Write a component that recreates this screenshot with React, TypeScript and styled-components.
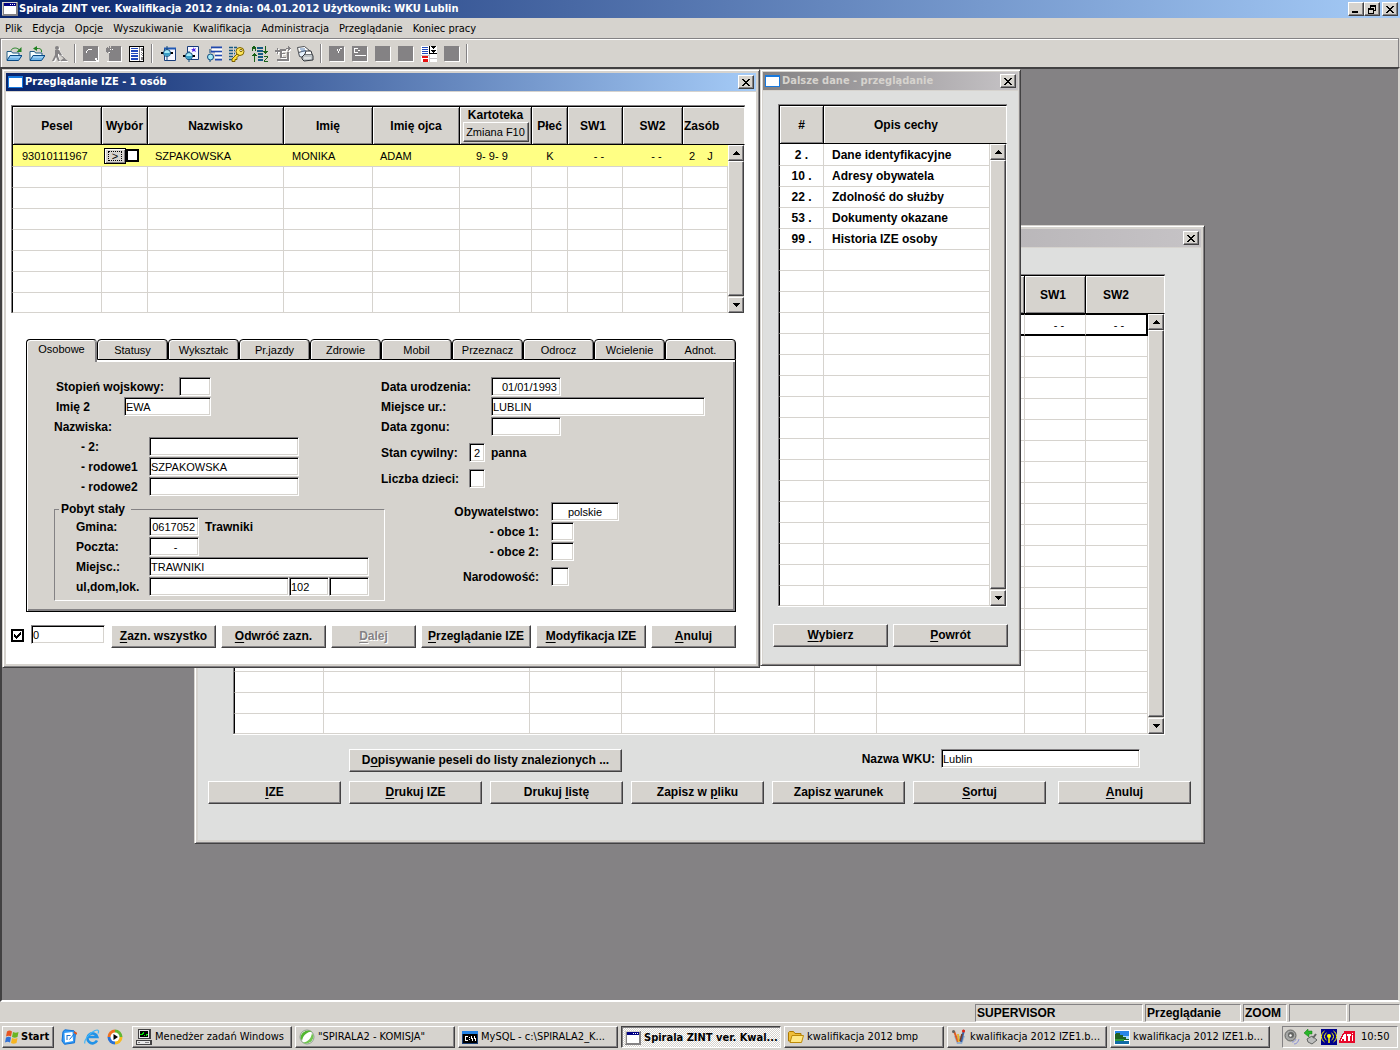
import React from 'react';
import styled, { createGlobalStyle, css } from 'styled-components';

const face = '#d6d3ce';
const shade = '#848284';
const dark = '#424142';
const ui = `"DejaVu Sans Condensed", "DejaVu Sans", sans-serif`;
const sans = `"Liberation Sans", Arial, sans-serif`;

const GlobalStyle = createGlobalStyle`
  *, *::before, *::after { box-sizing: border-box; }
  body { margin: 0; background: ${shade}; color: #000; font: 11px/14px ${sans}; }
  button, input { font: inherit; color: inherit; border-radius: 0; margin: 0; padding: 0; }
`;

const raised = css`
  background: ${face};
  border: 1px solid;
  border-color: #fff ${dark} ${dark} #fff;
  box-shadow: inset -1px -1px ${shade};
`;
const sunken = css`
  border: 1px solid;
  border-color: ${shade} #fff #fff ${shade};
`;

/* ---------- shell ---------- */

const Screen = styled.div`
  min-height: 100vh;
  display: flex;
  flex-direction: column;
  background: ${face};
  overflow: hidden;
`;

const MainTitle = styled.header`
  display: flex;
  align-items: center;
  height: 18px;
  padding: 0 2px;
  gap: 1px;
  background: linear-gradient(90deg, #08246b, #a5cbf7);
  color: #fff;
  font: bold 11px/18px ${ui};
`;

const TitleText = styled.h1`
  flex: 1;
  margin: 0;
  font: inherit;
  white-space: nowrap;
`;

const CaptionButton = styled.button<{ $apart?: boolean }>`
  ${raised}
  display: flex;
  align-items: center;
  justify-content: center;
  width: 16px;
  height: 14px;
  margin-left: ${(p) => (p.$apart ? 1 : -1)}px;
`;

const MenuBar = styled.nav`
  display: flex;
  align-items: center;
  height: 20px;
  padding: 1px 0 0 5px;
  gap: 10px;
  font: 11px/14px ${ui};
`;

const MenuItem = styled.a`
  color: #000;
  text-decoration: none;
  white-space: nowrap;
`;

const ToolBar = styled.div`
  display: flex;
  align-items: center;
  height: 29px;
  padding: 1px 0 0 1px;
  margin-right: 1px;
  border-top: 1px solid ${shade};
  border-left: 1px solid ${shade};
  border-right: 1px solid ${shade};
  box-shadow: inset 1px 1px #fff;
`;

const ToolButton = styled.button`
  display: flex;
  align-items: center;
  justify-content: center;
  width: 23px;
  height: 22px;
  border: 0;
  background: none;
`;

const ToolSeparator = styled.span`
  width: 2px;
  height: 19px;
  margin: 0 3px;
  border-left: 1px solid ${shade};
  border-right: 1px solid #fff;
`;

const Workspace = styled.main`
  position: relative;
  flex: 1;
  min-height: 790px;
  background: ${shade};
  border: 2px solid;
  border-color: ${dark} ${face} #fff ${dark};
  overflow: hidden;
`;

/* ---------- windows ---------- */

const Window = styled.section<{ $x: number; $y: number; $w: number; $edge: number; $fill: string }>`
  position: absolute;
  left: ${(p) => p.$x}px;
  top: ${(p) => p.$y}px;
  width: ${(p) => p.$w}px;
  padding: ${(p) => p.$edge - 1}px;
  background: ${(p) => p.$fill};
  border: 1px solid;
  border-color: ${face} ${dark} ${dark} ${face};
  box-shadow: inset 1px 1px #fff, inset -1px -1px ${shade}, inset 0 0 0 ${(p) => p.$edge - 1}px ${face};
`;

const TitleBar = styled.header<{ $active?: boolean }>`
  display: flex;
  align-items: center;
  height: 18px;
  padding: 0 2px;
  gap: 2px;
  font: bold 11px/18px ${ui};
  color: ${(p) => (p.$active ? '#fff' : face)};
  background: ${(p) => (p.$active ? 'linear-gradient(90deg, #08246b, #a5cbf7)' : 'linear-gradient(90deg, #848284, #c6c3c6)')};
`;

const WindowName = styled.h2`
  flex: 1;
  margin: 0;
  font: inherit;
  white-space: nowrap;
`;

const Body = styled.div<{ $pad: string }>`
  display: flex;
  flex-direction: column;
  border-top: 1px solid ${face};
  padding: ${(p) => p.$pad};
`;

/* ---------- grid ---------- */

const Table = styled.table`
  width: 100%;
  table-layout: fixed;
  border-collapse: separate;
  border-spacing: 0;
  background: #fff;
  border-left: 1px solid ${shade};
  border-top: 1px solid ${shade};
  box-shadow: 0 1px #fff;
`;

const HeadCell = styled.th<{ $last: boolean; $first: boolean; $align?: string; $pad?: string }>`
  height: 39px;
  padding: ${(p) => p.$pad || '0'};
  background: ${face};
  border-top: 1px solid #000;
  border-bottom: 1px solid #000;
  border-left: ${(p) => (p.$first ? '1px solid #000' : '0')};
  border-right: ${(p) => (p.$last ? '1px solid #fff' : '1px solid #000')};
  box-shadow: inset 1px 1px #fff, inset -1px -1px ${(p) => (p.$last ? face : shade)};
  font: bold 12px/14px ${sans};
  text-align: ${(p) => p.$align || 'center'};
  white-space: nowrap;
`;

const Cell = styled.td<{ $first?: boolean; $top?: boolean; $end?: boolean; $tone?: string; $pad?: number; $align?: string; $bold?: boolean }>`
  height: ${(p) => (p.$top ? 22 : p.$end ? 20 : 21)}px;
  padding: 0 0 0 ${(p) => p.$pad || 0}px;
  background: ${(p) => p.$tone || '#fff'};
  border-left: ${(p) => (p.$first ? '1px solid #000' : '0')};
  border-right: ${(p) => (p.$tone ? '0' : `1px solid ${face}`)};
  border-bottom: 1px solid ${face};
  font: ${(p) => (p.$bold ? `bold 12px/14px ${sans}` : `11px/14px ${sans}`)};
  text-align: ${(p) => p.$align || 'left'};
  white-space: pre;
`;

const FocusCell = styled(Cell)`
  border-bottom: 2px solid #000;
  border-top: 1px solid #000;
  &:nth-last-child(2) { border-right: 2px solid #000; }
`;

const ScrollCell = styled.td`
  height: 1px;
  padding: 0;
  background: ${face};
  border-right: 1px solid #fff;
`;

const ScrollTrack = styled.div`
  display: flex;
  flex-direction: column;
  height: 100%;
`;

const ScrollArrow = styled.button`
  ${raised}
  display: flex;
  align-items: center;
  justify-content: center;
  width: 16px;
  height: 16px;
`;

const ScrollThumb = styled.div`
  ${raised}
  flex: 1;
  width: 16px;
  margin-bottom: 1px;
`;

const StackHead = styled.div`
  display: flex;
  flex-direction: column;
  align-items: center;
  padding-bottom: 1px;
`;

const SmallButton = styled.button`
  ${raised}
  width: 66px;
  height: 20px;
  font: 11px/14px ${sans};
`;

const PickBox = styled.div`
  display: flex;
  align-items: center;
  padding-left: 2px;
`;

const PickButton = styled.button`
  width: 22px;
  height: 16px;
  display: flex;
  align-items: center;
  justify-content: center;
  background: ${face};
  border: 1px solid #000;
  box-shadow: inset 1px 1px #fff, inset -1px -1px ${shade};
  font: 11px/12px ${sans};
  span { width: 14px; height: 10px; line-height: 8px; border: 1px dotted #000; }
`;

const CheckBox = styled.input`
  appearance: none;
  width: 13px;
  height: 13px;
  background: #fff;
  border: 2px solid #000;
`;

const CheckHolder = styled.label`
  display: grid;
  width: 20px;
  padding-top: 4px;
  & > * { grid-area: 1 / 1; }
  svg { margin: 2px; pointer-events: none; }
`;

type Col = { w: number; head: React.ReactNode; pad?: number; align?: string; headAlign?: string; headPad?: string };

function Grid({ cols, rows, total, tone, bold, focus, label }: {
  cols: Col[]; rows: React.ReactNode[][]; total: number; tone?: string; bold?: boolean; focus?: boolean; label: string;
}) {
  const lines = Array.from({ length: total }, (_, i) => rows[i] || []);
  return (
    <Table aria-label={label}>
      <colgroup>
        {cols.map((c, i) => <col key={i} width={i === 0 ? c.w + 1 : c.w} />)}
        <col width={17} />
      </colgroup>
      <thead>
        <tr>
          {cols.map((c, i) => (
            <HeadCell key={i} $first={i === 0} $last={i === cols.length - 1} $align={c.headAlign} $pad={c.headPad} colSpan={i === cols.length - 1 ? 2 : 1}>
              {c.head}
            </HeadCell>
          ))}
        </tr>
      </thead>
      <tbody>
        {lines.map((line, r) => (
          <tr key={r}>
            {cols.map((c, i) => {
              const Kind = focus && r === 0 ? FocusCell : Cell;
              return (
                <Kind key={i} $first={i === 0} $top={r === 0} $end={r === total - 1} $tone={r === 0 ? tone : undefined}
                  $pad={c.pad} $align={c.align} $bold={bold}>{line[i]}</Kind>
              );
            })}
            {r === 0 && (
              <ScrollCell rowSpan={total}>
                <ScrollTrack>
                  <ScrollArrow aria-label="W górę"><svg width="7" height="4" shapeRendering="crispEdges"><path d="M3 0h1v1h1v1h1v1h1v1H0V3h1V2h1V1h1z" /></svg></ScrollArrow>
                  <ScrollThumb />
                  <ScrollArrow aria-label="W dół"><svg width="7" height="4" shapeRendering="crispEdges"><path d="M0 0h7v1H6v1H5v1H4v1H3V3H2V2H1V1H0z" /></svg></ScrollArrow>
                </ScrollTrack>
              </ScrollCell>
            )}
          </tr>
        ))}
      </tbody>
    </Table>
  );
}

/* ---------- controls ---------- */

const PushButton = styled.button<{ $w: number; $push?: boolean }>`
  ${raised}
  flex: 0 0 auto;
  width: ${(p) => p.$w}px;
  height: 23px;
  margin-left: ${(p) => (p.$push ? 'auto' : 0)};
  padding-bottom: 2px;
  font: bold 12px/14px ${sans};
  white-space: nowrap;
  u { text-underline-offset: 2px; }
  &:disabled { color: ${shade}; text-shadow: 1px 1px #fff; }
`;

const Line = styled.div<{ $gap?: number; $top?: number; $left?: number }>`
  display: flex;
  align-items: flex-start;
  gap: ${(p) => p.$gap || 0}px;
  margin-top: ${(p) => p.$top || 0}px;
  padding-left: ${(p) => p.$left || 0}px;
`;

const TextBox = styled.input<{ $w: number; $align?: string }>`
  ${sunken}
  flex: 0 0 auto;
  width: ${(p) => p.$w}px;
  height: 19px;
  padding: ${(p) => (p.$align === 'right' ? '0 3px 0 1px' : '0 1px')};
  background: #fff;
  box-shadow: inset 1px 1px #000, inset -1px -1px ${face};
  font: 11px/14px ${sans};
  text-align: ${(p) => p.$align || 'left'};
`;

const TabStrip = styled.div`
  display: flex;
  margin: 26px 9px 0 15px;
`;

const Tab = styled.button<{ $on?: boolean }>`
  position: relative;
  z-index: ${(p) => (p.$on ? 1 : 0)};
  flex: 1;
  height: ${(p) => (p.$on ? 23 : 21)}px;
  margin-bottom: ${(p) => (p.$on ? -2 : 0)}px;
  background: ${face};
  border: 1px solid #000;
  border-bottom-width: ${(p) => (p.$on ? 0 : 1)}px;
  border-right-color: ${(p) => (p.$on ? shade : '#000')};
  border-radius: 4px 4px 0 0;
  box-shadow: inset 1px 1px #fff, inset -1px 0 ${shade};
  font: 11px/14px ${sans};
  padding-bottom: ${(p) => (p.$on ? 4 : 0)}px;
`;

const TabPanel = styled.div`
  display: flex;
  margin: 0 9px 0 15px;
  padding: 17px 0 10px 27px;
  background: ${face};
  border: 1px solid #000;
  border-top: 0;
  box-shadow: inset 1px 2px #fff, inset -2px -2px ${shade};
`;

const FormColumn = styled.div<{ $w: number }>`
  display: flex;
  flex-direction: column;
  width: ${(p) => p.$w}px;
`;

const FieldRow = styled.div<{ $indent?: number; $gap?: number }>`
  display: flex;
  height: 20px;
  padding-left: ${(p) => p.$indent || 0}px;
  margin-top: ${(p) => p.$gap || 0}px;
`;

const FieldLabel = styled.label<{ $w?: number; $right?: boolean }>`
  flex: 0 0 auto;
  width: ${(p) => (p.$w ? `${p.$w}px` : 'auto')};
  padding-right: ${(p) => (p.$right ? 12 : 0)}px;
  text-align: ${(p) => (p.$right ? 'right' : 'left')};
  font: bold 12px/20px ${sans};
  white-space: nowrap;
`;

const FieldNote = styled.span`
  padding-left: 6px;
  font: bold 12px/20px ${sans};
`;

const Group = styled.fieldset`
  width: 331px;
  margin: 5px 0 0;
  padding: 1px 0 3px 21px;
  border: 1px solid;
  border-color: ${shade} #fff #fff ${shade};
  legend { margin-left: -17px; padding: 0 6px 0 2px; font: bold 12px/14px ${sans}; }
`;

function Field({ id, text, label, w, value = '', align, indent, gap, note, right }: {
  id: string; text: string; label: number; w: number; value?: string; align?: string; indent?: number; gap?: number; note?: string; right?: boolean;
}) {
  return (
    <FieldRow $indent={indent} $gap={gap}>
      <FieldLabel htmlFor={id} $w={label} $right={right}>{text}</FieldLabel>
      <TextBox id={id} $w={w} $align={align} defaultValue={value} />
      {note && <FieldNote>{note}</FieldNote>}
    </FieldRow>
  );
}

/* ---------- status bar and task bar ---------- */

const StatusBar = styled.footer`
  display: flex;
  justify-content: flex-end;
  gap: 2px;
  height: 20px;
  padding-top: 2px;
  font: bold 12px/16px ${sans};
`;

const StatusPane = styled.div<{ $w: number }>`
  ${sunken}
  width: ${(p) => p.$w}px;
  height: 18px;
  padding-left: 1px;
`;

const TaskBar = styled.footer`
  display: flex;
  align-items: flex-start;
  gap: 3px;
  height: 28px;
  padding: 3px 2px 0;
  border-top: 1px solid #fff;
  font: 11px/14px ${ui};
`;

const StartButton = styled.button`
  ${raised}
  display: flex;
  align-items: center;
  gap: 1px;
  width: 52px;
  height: 22px;
  padding-left: 1px;
  font: bold 11px/14px ${ui};
`;

const QuickLaunch = styled.div`
  display: flex;
  gap: 1px;
  width: 72px;
  padding: 0 0 0 1px;
`;

const QuickButton = styled.button`
  display: flex;
  align-items: center;
  justify-content: center;
  width: 22px;
  height: 22px;
  border: 0;
  background: none;
`;

const TaskButton = styled.button<{ $on?: boolean }>`
  ${raised}
  display: flex;
  align-items: center;
  gap: 3px;
  flex: 0 1 160px;
  min-width: 0;
  height: 22px;
  padding: 0 0 0 3px;
  span { white-space: nowrap; }
  svg { flex: none; }
  ${(p) => p.$on && css`
    background: repeating-conic-gradient(#fff 0 25%, ${face} 0 50%) 0 0 / 2px 2px;
    border-color: ${dark} #fff #fff ${dark};
    box-shadow: inset 1px 1px ${shade};
    padding-top: 2px;
    font-weight: bold;
  `}
`;

const Tray = styled.div`
  ${sunken}
  display: flex;
  align-items: center;
  gap: 2px;
  height: 22px;
  width: 116px;
  margin-left: auto;
  padding-left: 1px;
  time { margin-left: 4px; }
`;

/* ---------- icons ---------- */

const Px = ({ children, w = 16, h = 16 }: { children: React.ReactNode; w?: number; h?: number }) => (
  <svg width={w} height={h} viewBox={`0 0 ${w} ${h}`} shapeRendering="crispEdges" aria-hidden="true">{children}</svg>
);
const Art = ({ children, w = 16 }: { children: React.ReactNode; w?: number }) => (
  <svg width={w} height="16" viewBox={`0 0 ${w} 16`} fill="none" aria-hidden="true">{children}</svg>
);

const AppIcon = () => (
  <Px h={14}>
    <path fill="#848284" d="M0 0h16v14H0z" /><path fill="#d6d3ce" d="M0 0h15v1H1v12H0z" />
    <path fill="#fff" d="M2 4h12v8H2z" /><path fill="#000084" d="M2 1h12v3H2z" />
    <path fill="#fff" d="M8 2h1v1H8zM10 2h1v1h-1zM12 2h1v1h-1z" />
  </Px>
);
const FormIcon = () => (
  <Px w={15} h={12}>
    <path fill="#1879de" d="M0 0h15v12H0z" /><path fill="#fff" d="M1 2h13v9H1z" />
  </Px>
);
const CloseGlyph = () => <Px w={8} h={7}><path d="M0 0h2v1h1v1h2V1h1V0h2v1H7v1H6v1H5v1h1v1h1v1h1v1H6V6H5V5H3v1H2v1H0V6h1V5h1V4h1V3H2V2H1V1H0z" /></Px>;
const MinGlyph = () => <Px w={8} h={8}><path d="M0 6h6v2H0z" /></Px>;
const RestoreGlyph = () => <Px w={8} h={9}><path d="M2 0h6v6H6V5h1V2H3v1H2zM0 3h6v6H0zm1 2v3h4V5z" fillRule="evenodd" /></Px>;

const FolderArrow = ({ back }: { back?: boolean }) => (
  <Art>
    <path d="M1 14V5.500h4.500l1 1.500H13v2" fill="#f7ffff" stroke="#215a84" />
    <path d="M1 14.500 4 9.500h12l-3.500 5z" fill="#73b6e7" stroke="#084984" />
    <path d="M4 11h10" stroke="#bde3ff" />
    {back ? <><path d="M5 2.500h4.500c2 0 3 1 3 2.500v1" stroke="#218221" /><path d="M8 0v5L4 2.500z" fill="#218221" /></>
      : <><path d="M5 4.500C6 2 10 1 13 3.500" stroke="#218221" /><path d="M15.500 1v5h-5z" fill="#218221" /></>}
  </Art>
);
const diggerShape = 'M3 4h4l3 5H8L6 7v3l2 5H6L4 11l-2 4H0l3-6zM8 15l4-3 4 3z';
const Digger = () => (
  <Art>
    <g transform="translate(1 1)" fill="#fff"><circle cx="5" cy="2" r="2" /><path d={diggerShape} /></g>
    <g fill="#848284"><circle cx="5" cy="2" r="2" /><path d={diggerShape} /></g>
    <path d="M5 6l8 7" stroke="#848284" />
  </Art>
);
const GreySquare = ({ kind }: { kind?: string }) => (
  <Px>
    <path fill="#fff" d="M1 1h15v15H1z" /><path fill="#848284" d="M0 0h15v15H0z" />
    {kind === 'curve' && <path fill="#fff" d="M3 5h1V4h1V3h4v1H5v1H4v2H3zM12 12h2v2h1v1h-2v-1h-1z" />}
    {kind === 'spark' && <><path fill="#d6d3ce" d="M0 0h5v2H0zM0 6h3v9H0z" /><path fill="#848284" d="M1 1h1v1H1zM3 0h1v3H3zM5 2h2v1H5zM0 4h3v1H0zM1 6h1v1H1z" /><path fill="#fff" d="M4 3h1v1H4zM3 6h1v1H3zM6 3h1v1H6z" /></>}
    {kind === 'check' && <path fill="#fff" d="M8 3h1v2H8zM9 5h1v2H9zM10 3h1v2h-1zM11 2h2v1h-2z" />}
    {kind === 'line' && <path fill="#fff" d="M2 2h4v1H3v3h3v1H2zM3 9h11v1H3zM6 4h2v1H6z" />}
  </Px>
);
const ListIcon = () => (
  <Px>
    <path fill="#000" d="M0 0h15v16H0z" /><path fill="#fff" d="M1 1h13v14H1z" />
    <path fill="#2149bd" d="M2 2h7v1H2zM2 4h7v2H2zM2 7h7v1H2zM2 9h7v2H2zM2 12h7v2H2z" />
    <path fill="#848284" d="M10 1h1v14h-1zM12 2h2v3h-2zM12 6h1v1h-1zM13 7h1v1h-1zM12 8h1v1h-1zM13 9h1v1h-1zM12 11h2v3h-2z" />
  </Px>
);
const Lens = ({ x, y }: { x: number; y: number }) => (
  <g transform={`translate(${x} ${y})`}>
    <path d="M-6 0H6" stroke="#000" strokeWidth="2" />
    <circle r="3.500" fill="#a5ebf7" stroke="#10497b" /><path d="M-3 0a3 3 0 0 0 6 0z" fill="#399ec6" />
  </g>
);
const FindForm = () => <Art><path d="M4.500 2.500h11v12h-11z" fill="#f7f7ff" stroke="#183c7b" /><path d="M4 2.500h12" stroke="#2159b5" strokeWidth="2" /><path d="M7 0v4M7 11v4" stroke="#10497b" /><Lens x={7} y={7} /></Art>;
const FindStar = () => <Art><path d="M4.500 .5h11v13h-11z" fill="#f7f7ff" stroke="#183c7b" /><path d="M10 1l1 2 2-1-1 2 1 2-2-1-2 1 .5-2-1.500-1h2z" fill="#4a20e7" /><path d="M6 5v2M6 13v3" stroke="#10497b" /><Lens x={6} y={10} /></Art>;
const FindRows = () => <Art><path d="M5 1.500h11M5 5.500h11M9 9.500h7M9 13.500h7" stroke="#2149ad" strokeWidth="2" /><path d="M6 3.500h10M9 7.500h7M9 11.500h7" stroke="#fff" strokeWidth="2" /><path d="M4 3v4M4 13v3" stroke="#10497b" /><circle cx="4.500" cy="11" r="3" fill="#a5ebf7" stroke="#10497b" /></Art>;
const KeyRows = () => (
  <Art w={17}>
    <path d="M1 1.500h8M1 4.500h6M1 7.500h6M1 10.500h7M1 13.500h5" stroke="#185a84" strokeDasharray="4 1" strokeWidth="1.500" />
    <circle cx="12" cy="5.500" r="4" fill="#ffe75a" stroke="#7b6100" /><circle cx="13" cy="4.500" r="1.200" fill="#fff" stroke="#7b6100" />
    <path d="M9 8l-5 5v2.500h3v-2h2v-2l2-2z" fill="#ffdf39" stroke="#7b6100" />
  </Art>
);
const SortRows = () => (
  <Px>
    <path fill="#186118" d="M1 0h2v1h1v4H3V3H1v2H0V1h1zM2 7h1v1h1v1h1v1H3v6H2v-6H0V9h1V8h1z" />
    <path fill="#185a84" d="M5 1h6v2H5zM5 4h6v2H5zM6 7h5v2H6zM6 10h5v2H6zM6 13h5v2H6z" />
    <path fill="#186118" d="M13 0h1v5h2v1h-1v1h-1v1h-1V7h-1V6h-1V5h2zM12 10h4v2h-1v1h-1v1h-1v1h3v1h-4v-2h1v-1h1v-1h1v-1h-3z" />
  </Px>
);
const greyFormShape = 'M2 2h1v2h3v2H3v2H2V6H0V4h2zM13 0h1v1h1v1h1v1h-1v1h-1v1h-1V3h-2V2h2zM5 3h6v2H7v2h3v1H7v3h4v1H5zM12 6h2v7h-2zM2 13h12v2H2z';
const GreyForm = () => (
  <Px>
    <path d={greyFormShape} fill="#fff" transform="translate(1 1)" />
    <path d={greyFormShape} fill="#848284" />
  </Px>
);
const PrintDocs = () => (
  <Art w={17}>
    <path d="M.5 1.500l7-1 5 4-6 3-5-1z" fill="#fff" stroke="#4a4d52" /><path d="M1.500 6.500l7-2 4 4-6 3-4-1z" fill="#e7f3ff" stroke="#4a4d52" /><path d="M3 3h5M4 5h5" stroke="#5a82b5" />
    <path d="M5 11l3-3h7l1 2v4l-9 1-2-2z" fill="#bdc3c6" stroke="#31353a" /><path d="M8 8l1-3h5l1 3" fill="#fff" stroke="#31353a" /><path d="M7 12h7" stroke="#fff" />
  </Art>
);
const FilterList = () => (
  <Px>
    <path fill="#fff" d="M0 0h16v16H0z" /><path fill="#2149bd" d="M1 1h6v1H1zM1 3h6v1H1zM1 5h6v1H1zM1 7h6v1H1z" />
    <path fill="#e71010" d="M1 10h6v2H1zM2 13h5v3H2z" /><path fill="#000" d="M8 0h1v8H8zM10 0h5v1h-1v1h-1v1h-1V2h-1V1h-1zM10 4h5v1h-1v1h-1v1h-1V6h-1V5h-1zM9 7h7v1H9z" />
    <path fill="#c6c3c6" d="M8 8h1v8H8zM0 9h8v1H0zM9 12h7v1H9z" />
  </Px>
);

const Flag = () => (
  <Art>
    <path d="M3 2.500C5 1 6.500 1.500 8 2.500L7 7.500C5.500 6.500 4 6.500 2 7.500z" fill="#e75521" /><path d="M9 3c2 1 3.500 1 5.500 0l-1 5c-2 1-3.500 1-5.500 0z" fill="#6bb521" />
    <path d="M2 8.500c2-1 3.500-1 5 0l-1 5c-1.500-1-3-1-5 0z" fill="#3171d6" /><path d="M8 9c2 1 3.500 1 5.500 0l-1 5c-2 1-4 1-5.500 0z" fill="#f7b521" />
  </Art>
);
const DeskIcon = () => <Art><path d="M2 2.500L4 .8l9 1 1.500 2-1 10-10 1.500L1 12z" fill="#319af7" stroke="#1071d6" /><path d="M3.500 4l8-1 .5 9-8 1.500z" fill="#fff" /><path d="M6 6.500h3.500M6 6v5M8.500 10.500l5-6" stroke="#1871ce" /><path d="M13 3l3 2" stroke="#de5921" strokeWidth="2" /></Art>;
const IeIcon = () => <Art><path d="M13 11.500A5 5 0 1 1 13.300 8H5" stroke="#2192e7" strokeWidth="2.600" /><path d="M1 14.500C-.5 12 5 4 11 1.500c4-1.500 4 1 3 3" stroke="#42b6f7" strokeWidth="1.200" /></Art>;
const MediaIcon = () => (
  <Art>
    <path d="M8 8V.5A7.500 7.500 0 0 0 .5 8z" fill="#ef7121" /><path d="M8 8h7.500A7.500 7.500 0 0 0 8 .5z" fill="#63b631" /><path d="M8 8H.5A7.500 7.500 0 0 0 8 15.500z" fill="#2971d6" /><path d="M8 8v7.500A7.500 7.500 0 0 0 15.500 8z" fill="#f7ba21" />
    <circle cx="8" cy="8" r="4.500" fill="#fff" /><path d="M6.500 5l4.500 3-4.500 3z" fill="#000" />
  </Art>
);
const PcIcon = () => (
  <Px>
    <path fill="#424142" d="M2 0h13v10H2zM0 11h16v5H0z" /><path fill="#e7e7e7" d="M3 1h10v8H3zM1 12h13v3H1z" />
    <path fill="#000" d="M4 2h8v6H4z" /><path fill="#00e700" d="M4 5h2V4h1V3h1v3h1v1h1V5h2v1h-1v1H8V5H7v1H4z" /><path fill="#848284" d="M9 13h4v1H9zM2 13h2v1H2z" />
  </Px>
);
const LeafIcon = () => <Art><circle cx="8" cy="8" r="7" fill="#fff" stroke="#8c9a8c" /><path d="M1.500 9C2 3 8 0 13 2.500 8 3 4 6 3 12z" fill="#52b631" /><path d="M14.500 7c0 6-6 9-11 6.500C9 13 12 10 13 4z" fill="#73c652" /></Art>;
const CmdIcon = () => <Px h={13}><path fill="#183c73" d="M0 0h16v13H0z" /><path fill="#2182e7" d="M0 0h16v3H0z" /><path fill="#000" d="M1 3h14v9H1z" /><path fill="#fff" d="M3 5h3v1H4v3h2v1H3zM7 6h1v1H7zM7 8h1v1H7zM9 5h1v2h1v3h-1V8H9zM12 5h1v2h1v3h-1V8h-1z" /></Px>;
const FolderIcon = () => <Art><path d="M.5 12V3.500l1-1h4l1.500 2h6v8z" fill="#efbe39" stroke="#ad7900" /><path d="M2 13.500l2-7h11.500l-2 7z" fill="#ffe784" stroke="#bd8a08" /></Art>;
const BrushIcon = () => <Art><path d="M3 7l3 8h5l3-8z" fill="#94aece" /><path d="M3 2l4 11" stroke="#de5921" strokeWidth="2" /><path d="M7 5l1 8" stroke="#e7b531" strokeWidth="2" /><path d="M13 1L10 13" stroke="#3961a5" strokeWidth="2" /><path d="M11 5l-2 7" stroke="#7b3921" strokeWidth="1.500" /><circle cx="2.500" cy="2.500" r="1.500" fill="#636563" /><circle cx="12.500" cy="2" r="1.500" fill="#e72110" /></Art>;
const PhotoIcon = () => <Px h={15}><path fill="#fff" d="M0 0h16v15H0z" /><path fill="#2986e7" d="M1 1h14v6H1z" /><path fill="#a5dbff" d="M1 6h14v3H1z" /><path fill="#216121" d="M2 3h4v2h3v2h3v2h3v1H1V4h1z" /><path fill="#319a39" d="M1 9h9v2H1z" /><path fill="#106ba5" d="M1 11h14v3H1z" /></Px>;
const SpeakerIcon = () => <Art w={17}><circle cx="6.500" cy="6.500" r="5.500" fill="#a5a6a5" stroke="#636563" /><circle cx="7" cy="6" r="3" fill="#636563" /><circle cx="6.500" cy="6.500" r="1.200" fill="#fff" /><path d="M8 13c2 0 3-1 4-3M10 15c3 0 4-2 5-5" stroke="#8c92d6" /></Art>;
const UnplugIcon = () => <Art><path d="M4 10l5-3 5 4-5 4-4-2z" fill="#bdbebd" stroke="#636563" /><path d="M1 4l4-4v2h4v3H6v3z" fill="#29b629" stroke="#107510" strokeWidth=".5" /><path d="M10 9l3-4" stroke="#636563" strokeWidth="2" /></Art>;
const SignalIcon = () => (
  <Art><path d="M0 0h16v16H0z" fill="#00008c" /><circle cx="8" cy="7" r="2" fill="#ffff00" /><path d="M8 8v6" stroke="#ffff00" strokeWidth="1.500" /><path d="M5.500 4a4 4 0 0 0 0 7M10.500 4a4 4 0 0 1 0 7M3.500 2a6.500 6.500 0 0 0 0 11M12.500 2a6.500 6.500 0 0 1 0 11" stroke="#ffff00" /></Art>
);
const AtiIcon = () => (
  <Px><path fill="#e70829" d="M5 2h11v12H0v-3h1V9h1V7h1V5h1V4h1z" /><path fill="#fff" d="M5 5h2v7H5v-2H3v2H2v-2h1V8h1V6h1zM8 5h4v2h-1v5H9V7H8zM13 4h1v1h-1zM13 6h1v6h-1z" /></Px>
);
const Tick = () => <Px w={9} h={9}><path d="M1 3h1v1h1v1h1V4h1V3h1V2h1V1h1v3H7v1H6v1H5v1H4v1H3V7H2V6H1z" /></Px>;

/* ---------- data ---------- */

const menu = ['Plik', 'Edycja', 'Opcje', 'Wyszukiwanie', 'Kwalifikacja', 'Administracja', 'Przeglądanie', 'Koniec pracy'];

const tools: { name: string; icon: React.ReactNode }[][] = [
  [{ name: 'Otwórz', icon: <FolderArrow /> }, { name: 'Wróć', icon: <FolderArrow back /> }, { name: 'Praca', icon: <Digger /> }],
  [{ name: 'Widok', icon: <GreySquare kind="curve" /> }, { name: 'Nowy', icon: <GreySquare kind="spark" /> }, { name: 'Lista', icon: <ListIcon /> }],
  [{ name: 'Szukaj', icon: <FindForm /> }, { name: 'Szukaj nowych', icon: <FindStar /> }, { name: 'Szukaj w liście', icon: <FindRows /> }, { name: 'Klucz', icon: <KeyRows /> },
    { name: 'Sortuj', icon: <SortRows /> }, { name: 'Formularz', icon: <GreyForm /> }, { name: 'Drukuj', icon: <PrintDocs /> }],
  [{ name: 'Zatwierdź', icon: <GreySquare kind="check" /> }, { name: 'Wiersz', icon: <GreySquare kind="line" /> }, { name: 'Pole 1', icon: <GreySquare /> },
    { name: 'Pole 2', icon: <GreySquare /> }, { name: 'Filtr', icon: <FilterList /> }, { name: 'Pole 3', icon: <GreySquare /> }],
];

const tabs = ['Osobowe', 'Statusy', 'Wykształc', 'Pr.jazdy', 'Zdrowie', 'Mobil', 'Przeznacz', 'Odrocz', 'Wcielenie', 'Adnot.'];

const personCols: Col[] = [
  { w: 89, head: 'Pesel', pad: 9 },
  { w: 46, head: 'Wybór' },
  { w: 136, head: 'Nazwisko', pad: 7 },
  { w: 89, head: 'Imię', pad: 8 },
  { w: 87, head: 'Imię ojca', pad: 7 },
  { w: 72, head: <StackHead>Kartoteka<SmallButton>Zmiana F10</SmallButton></StackHead>, pad: 16 },
  { w: 36, head: 'Płeć', align: 'center' },
  { w: 55, head: 'SW1', align: 'center', pad: 7, headPad: '0 4px 0 0' },
  { w: 60, head: 'SW2', align: 'center', pad: 7 },
  { w: 45, head: 'Zasób', headAlign: 'left', pad: 6, headPad: '0 0 0 1px' },
];
const personRow: React.ReactNode[] = [
  '93010111967',
  <PickBox key="pick"><PickButton aria-label="Wybierz osobę"><span>&gt;</span></PickButton><CheckBox type="checkbox" aria-label="Zaznacz osobę" /></PickBox>,
  'SZPAKOWSKA', 'MONIKA', 'ADAM', '9- 9- 9', 'K', '- -', '- -', '2    J',
];

const traitCols: Col[] = [{ w: 44, head: '#', align: 'center' }, { w: 166, head: 'Opis cechy', pad: 8, headPad: '0 18px 0 0' }];
const traits = [['2 .', 'Dane identyfikacyjne'], ['10 .', 'Adresy obywatela'], ['22 .', 'Zdolność do służby'], ['53 .', 'Dokumenty okazane'], ['99 .', 'Historia IZE osoby']];

const listCols: Col[] = [
  ...[89, 206, 92, 93, 100, 62, 148].map((w) => ({ w, head: '' })),
  { w: 61, head: 'SW1', align: 'center', pad: 8, headPad: '0 4px 0 0' },
  { w: 62, head: 'SW2', align: 'center', pad: 6, headPad: '0 18px 0 0' },
];

/* ---------- page ---------- */

const WkuField = styled.div`
  display: flex;
  gap: 6px;
  margin-left: auto;
  padding-right: 51px;
`;
const GridHolder = styled.div<{ $w: number }>`
  width: ${(p) => p.$w}px;
`;
const Counter = styled.div`
  display: flex;
  width: 95px;
`;

function ListWindow() {
  return (
    <Window $x={192} $y={156} $w={1011} $edge={4} $fill="#dedfde" aria-label="Lista znalezionych">
      <TitleBar><FormIcon /><WindowName /><CaptionButton $apart aria-label="Zamknij"><CloseGlyph /></CaptionButton></TitleBar>
      <Body $pad="26px 10px 36px 10px">
        <Line $left={25}>
          <GridHolder $w={932}>
            <Grid label="Lista osób" cols={listCols} rows={[['', '', '', '', '', '', '', '- -', '- -']]} total={20} focus />
          </GridHolder>
        </Line>
        <Line $top={15} $left={141}>
          <PushButton $w={273}>D<u>o</u>pisywanie peseli do listy znalezionych ...</PushButton>
          <WkuField>
            <FieldLabel htmlFor="wku">Nazwa WKU:</FieldLabel>
            <TextBox id="wku" $w={199} defaultValue="Lublin" />
          </WkuField>
        </Line>
        <Line $top={9} $gap={8}>
          <PushButton $w={133}><u>I</u>ZE</PushButton>
          <PushButton $w={133}><u>D</u>rukuj IZE</PushButton>
          <PushButton $w={133}>Drukuj <u>l</u>istę</PushButton>
          <PushButton $w={133}>Zapisz w <u>p</u>liku</PushButton>
          <PushButton $w={133}>Zapisz <u>w</u>arunek</PushButton>
          <PushButton $w={133}><u>S</u>ortuj</PushButton>
          <PushButton $w={133} $push><u>A</u>nuluj</PushButton>
        </Line>
      </Body>
    </Window>
  );
}

function TraitsWindow() {
  return (
    <Window $x={758} $y={0} $w={261} $edge={3} $fill="#dedfde" aria-label="Dalsze dane">
      <TitleBar><FormIcon /><WindowName>Dalsze dane - przeglądanie</WindowName><CaptionButton $apart aria-label="Zamknij"><CloseGlyph /></CaptionButton></TitleBar>
      <Body $pad="13px 10px 16px 10px">
        <Line $left={5}>
          <GridHolder $w={229}><Grid label="Cechy" cols={traitCols} rows={traits} total={22} bold /></GridHolder>
        </Line>
        <Line $top={18} $gap={5}>
          <PushButton $w={115}><u>W</u>ybierz</PushButton>
          <PushButton $w={115}><u>P</u>owrót</PushButton>
        </Line>
      </Body>
    </Window>
  );
}

function PersonWindow() {
  return (
    <Window $x={0} $y={0} $w={758} $edge={4} $fill="#fff" aria-label="Przeglądanie IZE">
      <TitleBar $active><FormIcon /><WindowName>Przeglądanie IZE - 1 osób</WindowName><CaptionButton $apart aria-label="Zamknij"><CloseGlyph /></CaptionButton></TitleBar>
      <Body $pad="13px 11px 16px 5px">
        <Grid label="Osoby" cols={personCols} rows={[personRow]} total={8} tone="#ffff84" />
        <TabStrip role="tablist">
          {tabs.map((t, i) => <Tab key={t} role="tab" aria-selected={i === 0} $on={i === 0}>{t}</Tab>)}
        </TabStrip>
        <TabPanel role="tabpanel">
          <FormColumn $w={327}>
            <Field id="rank" text="Stopień wojskowy:" indent={2} label={123} w={32} />
            <Field id="name2" text="Imię 2" indent={2} label={68} w={87} value="EWA" />
            <FieldRow><FieldLabel as="span">Nazwiska:</FieldLabel></FieldRow>
            <Field id="sur2" text="- 2:" indent={27} label={68} w={150} />
            <Field id="born1" text="- rodowe1" indent={27} label={68} w={150} value="SZPAKOWSKA" />
            <Field id="born2" text="- rodowe2" indent={27} label={68} w={150} />
            <Group>
              <legend>Pobyt stały</legend>
              <Field id="gmina" text="Gmina:" label={73} w={50} value="0617052" align="right" note="Trawniki" />
              <Field id="post" text="Poczta:" label={73} w={50} value=" -" align="center" />
              <Field id="place" text="Miejsc.:" label={73} w={220} value="TRAWNIKI" />
              <FieldRow>
                <FieldLabel htmlFor="street" $w={73}>ul,dom,lok.</FieldLabel>
                <TextBox id="street" $w={140} />
                <TextBox aria-label="dom" $w={40} defaultValue="102" />
                <TextBox aria-label="lokal" $w={40} />
              </FieldRow>
            </Group>
          </FormColumn>
          <FormColumn $w={350}>
            <Field id="birth" text="Data urodzenia:" label={110} w={70} value="01/01/1993" align="right" />
            <Field id="bplace" text="Miejsce ur.:" label={110} w={214} value="LUBLIN" />
            <Field id="death" text="Data zgonu:" label={110} w={70} />
            <Field id="marital" text="Stan cywilny:" label={88} w={16} value="2" align="center" gap={6} note="panna" />
            <Field id="kids" text="Liczba dzieci:" label={88} w={16} gap={6} />
            <Field id="citizen" text="Obywatelstwo:" right label={170} w={68} value="polskie" align="center" gap={13} />
            <Field id="other1" text="- obce 1:" right label={170} w={23} />
            <Field id="other2" text="- obce 2:" right label={170} w={23} />
            <Field id="nation" text="Narodowość:" right label={170} w={18} gap={5} />
          </FormColumn>
        </TabPanel>
        <Line $top={13} $gap={5}>
          <Counter>
            <CheckHolder><CheckBox type="checkbox" defaultChecked aria-label="Zaznaczone" /><Tick /></CheckHolder>
            <TextBox aria-label="Liczba zaznaczonych" $w={74} defaultValue="0" />
          </Counter>
          <PushButton $w={105}><u>Z</u>azn. wszystko</PushButton>
          <PushButton $w={105}><u>O</u>dwróć zazn.</PushButton>
          <PushButton $w={85} disabled><u>D</u>alej</PushButton>
          <PushButton $w={110}><u>P</u>rzeglądanie IZE</PushButton>
          <PushButton $w={110}><u>M</u>odyfikacja IZE</PushButton>
          <PushButton $w={85}><u>A</u>nuluj</PushButton>
        </Line>
      </Body>
    </Window>
  );
}

export default function App() {
  return (
    <Screen>
      <GlobalStyle />
      <MainTitle>
        <AppIcon />
        <TitleText>Spirala ZINT ver. Kwalifikacja 2012 z dnia: 04.01.2012 Użytkownik: WKU Lublin</TitleText>
        <CaptionButton $apart aria-label="Minimalizuj"><MinGlyph /></CaptionButton>
        <CaptionButton aria-label="Przywróć"><RestoreGlyph /></CaptionButton>
        <CaptionButton $apart aria-label="Zamknij"><CloseGlyph /></CaptionButton>
      </MainTitle>
      <MenuBar>{menu.map((m) => <MenuItem key={m} href="#">{m}</MenuItem>)}</MenuBar>
      <ToolBar role="toolbar">
        {tools.map((group, g) => (
          <React.Fragment key={g}>
            {group.map((t) => <ToolButton key={t.name} aria-label={t.name}>{t.icon}</ToolButton>)}
            <ToolSeparator />
          </React.Fragment>
        ))}
      </ToolBar>
      <Workspace>
        <ListWindow />
        <TraitsWindow />
        <PersonWindow />
      </Workspace>
      <StatusBar>
        <StatusPane $w={168}>SUPERVISOR</StatusPane>
        <StatusPane $w={96}>Przeglądanie</StatusPane>
        <StatusPane $w={44}>ZOOM</StatusPane>
        <StatusPane $w={58} />
        <StatusPane $w={51} />
      </StatusBar>
      <TaskBar>
        <StartButton><Flag />Start</StartButton>
        <QuickLaunch>
          <QuickButton aria-label="Pulpit"><DeskIcon /></QuickButton>
          <QuickButton aria-label="Internet Explorer"><IeIcon /></QuickButton>
          <QuickButton aria-label="Media Player"><MediaIcon /></QuickButton>
        </QuickLaunch>
        <TaskButton><PcIcon /><span>Menedżer zadań Windows</span></TaskButton>
        <TaskButton><LeafIcon /><span>"SPIRALA2 - KOMISJA"</span></TaskButton>
        <TaskButton><CmdIcon /><span>MySQL - c:\SPIRALA2_K...</span></TaskButton>
        <TaskButton $on><AppIcon /><span>Spirala ZINT ver. Kwal...</span></TaskButton>
        <TaskButton><FolderIcon /><span>kwalifikacja 2012 bmp</span></TaskButton>
        <TaskButton><BrushIcon /><span>kwalifikacja 2012 IZE1.b...</span></TaskButton>
        <TaskButton><PhotoIcon /><span>kwalifikacja 2012 IZE1.b...</span></TaskButton>
        <Tray><SpeakerIcon /><UnplugIcon /><SignalIcon /><AtiIcon /><time>10:50</time></Tray>
      </TaskBar>
    </Screen>
  );
}
